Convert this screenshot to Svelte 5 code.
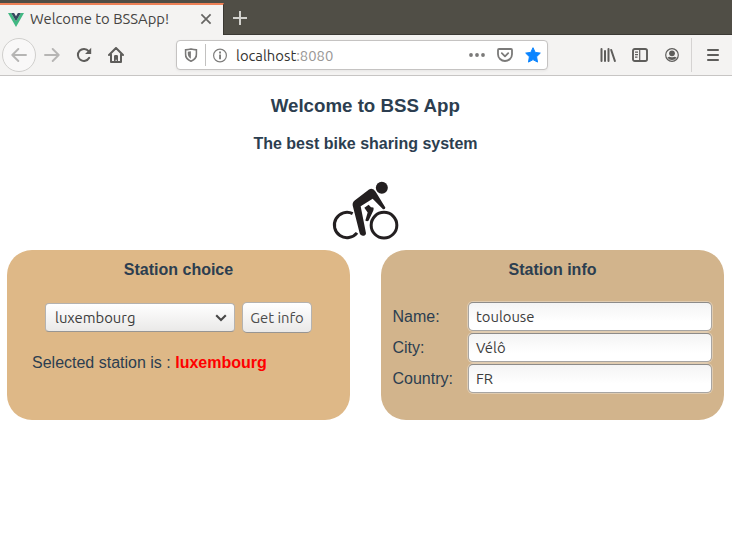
<script>
  const rows = [
    { label: 'Name:', value: 'toulouse' },
    { label: 'City:', value: 'Vélô' },
    { label: 'Country:', value: 'FR' }
  ];
</script>

<div class="window">
  <div class="tabs">
    <div class="tab">
      <svg class="vue" width="16" height="14" viewBox="0 0 16 14"><path fill="#41b883" d="M0 0h3.2L8 8.3 12.8 0H16L8 14z"/><path fill="#35495e" d="M3.2 0h2.9L8 3.3 9.9 0h2.9L8 8.3z"/></svg>
      <span class="title">Welcome to BSSApp!</span>
      <svg class="close" width="12" height="12" viewBox="0 0 12 12" stroke="#666563" stroke-width="1.7"><path d="M1.4 1.4l9.2 9.2M10.6 1.4l-9.2 9.2"/></svg>
    </div>
    <svg class="plus" width="14" height="14" viewBox="0 0 14 14" stroke="#d2d1cd" stroke-width="2"><path d="M7 0v14M0 7h14"/></svg>
  </div>

  <div class="toolbar">
    <div class="back"><svg width="16" height="14" viewBox="0 0 16 14"><path d="M15 7H1.500M7.3 1L1.3 7l6 6"/></svg></div>
    <svg class="forward" width="16" height="14" viewBox="0 0 16 14"><path d="M1 7h13.500M8.7 1l6 6-6 6"/></svg>
    <svg class="reload" width="16" height="16" viewBox="0 0 16 16"><path fill="none" stroke="#5e5d5b" stroke-width="2" stroke-linecap="round" d="M13.2 10.8A6 6 0 1 1 12.6 4.2"/><path fill="#5e5d5b" d="M15.2.8v6.1H9.1z"/></svg>
    <svg class="home" width="16" height="16" viewBox="0 0 16 16"><path fill="none" stroke="#5e5d5b" stroke-width="2" stroke-linecap="round" stroke-linejoin="round" d="M1 8l7-7 7 7M3 7.5V15h10V7.5"/><path fill="#5e5d5b" d="M6 15V9.3q0-1.3 1.3-1.3h1.4Q10 8 10 9.3V15H8.7v-2.2H7.6V15z"/></svg>
    <div class="url">
      <svg class="shield" width="13" height="14" viewBox="0 0 13 14"><path fill="none" stroke="#7a7978" stroke-width="1.7" d="M1 1.8Q4 1.7 6.5 1 9 1.7 12 1.8V6q0 5-5.5 7.2Q1 11 1 6z"/><path fill="#7a7978" d="M6.4 3.2v7.6Q3.3 9 3.3 5.8V3.7z"/></svg>
      <i class="split"></i>
      <svg class="info" width="15" height="15" viewBox="0 0 15 15"><circle cx="7.5" cy="7.5" r="6.4" fill="none" stroke="#7f7e7d" stroke-width="1.2"/><path fill="#7f7e7d" d="M6.6 6.5h1.9v4.7H6.6zM6.6 3.6h1.9v1.8H6.6z"/></svg>
      <span class="address">localhost<span>:8080</span></span>
      <svg class="dots" width="16" height="4" viewBox="0 0 16 4" fill="#7b7a79"><circle cx="2" cy="2" r="1.9"/><circle cx="8" cy="2" r="1.9"/><circle cx="14" cy="2" r="1.9"/></svg>
      <svg class="pocket" width="16" height="14" viewBox="0 0 16 14" fill="none" stroke="#7b7a79" stroke-width="1.8" stroke-linecap="round" stroke-linejoin="round"><path d="M2 1h12q1 0 1 1v4.2a7 6.8 0 0 1-14 0V2q0-1 1-1z"/><path d="M4.8 5.2L8 8.3l3.2-3.1"/></svg>
      <svg class="star" width="16" height="16" viewBox="0 0 16 16"><path fill="#0a84ff" stroke="#0a84ff" stroke-linejoin="round" d="M8 .7l2.2 4.7 5.1.7-3.7 3.6.9 5.4L8 12.6l-4.5 2.5.9-5.4L.7 6.1l5.1-.7z"/></svg>
    </div>
    <svg class="library" width="16" height="14" viewBox="0 0 16 14" stroke="#5e5d5b" stroke-width="2" stroke-linecap="round"><path d="M1.500 1v12M5 3v10M8.500 1v12M11.200 2l3.700 11"/></svg>
    <svg class="sidebar" width="16" height="14" viewBox="0 0 16 14" fill="none" stroke="#5e5d5b"><rect x="1" y="1" width="14" height="12" rx="1.8" stroke-width="1.9"/><path d="M7.7 1v12M3 4.1h3M3 6.6h3M3 9.1h2.5" stroke-width="1.2"/></svg>
    <svg class="account" width="14" height="14" viewBox="0 0 14 14" fill="#5e5d5b"><circle cx="7" cy="7" r="6.3" fill="none" stroke="#5e5d5b" stroke-width="1.2"/><circle cx="7" cy="5.3" r="2.9"/><path d="M2.4 9.4q2-.9 2.8-.5 1.8.9 3.6 0 .8-.4 2.8.5Q10.2 12 7 12t-4.6-2.6z"/></svg>
    <i class="divider"></i>
    <svg class="menu" width="12" height="12" viewBox="0 0 12 12" stroke="#5e5d5b" stroke-width="1.8" stroke-linecap="round"><path d="M.9 1h10.2M.9 6h10.2M.9 11h10.2"/></svg>
  </div>

  <main>
    <h3>Welcome to BSS App</h3>
    <h4>The best bike sharing system</h4>
    <svg class="bike" width="70" height="65" viewBox="29 23.500 210 195" fill="#231f20">
      <circle cx="184.500" cy="53" r="18"/>
      <circle cx="191" cy="165" r="38.500" fill="none" stroke="#231f20" stroke-width="9"/>
      <path fill="none" stroke="#231f20" stroke-width="9" d="M97 130.500A38 38 0 1 0 110 188"/>
      <path d="M146 58Q158 52 166 65L195 112Q195 119 188 117L157 86 121 108 137 189Q136 197 127 197 120 196 118 189L98 110Q94 98 103 91z"/>
      <path d="M132 113L145 104 152 111 159 112Q161 115 159 121L145 151Q141 155 135 151L142 127Z"/>
    </svg>
    <div class="cards">
      <section class="choice">
        <h4>Station choice</h4>
        <div class="controls">
          <div class="select"><span>luxembourg</span><svg width="12" height="8" viewBox="0 0 12 8"><path fill="none" stroke="#484848" stroke-width="2.100" d="M1.200 1.200L6 6l4.800-4.800"/></svg></div>
          <button>Get info</button>
        </div>
        <p>Selected station is : <b>luxembourg</b></p>
      </section>
      <section class="details">
        <h4>Station info</h4>
        <div class="form">
          {#each rows as row}
            <div class="row"><span class="label">{row.label}</span><div class="field">{row.value}</div></div>
          {/each}
        </div>
      </section>
    </div>
  </main>
</div>

<style>
  :global(body) { margin: 0; background: #fff; }
  * { box-sizing: border-box; }
  svg, i { flex: none; display: block; }
  .window { width: 732px; height: 547px; overflow: hidden; background: #fff; }
  .title, .address, .select, button, .field { font-family: Ubuntu, "Noto Sans", sans-serif; font-size: 14.800px; white-space: nowrap; }
  .tabs { height: 35px; display: flex; align-items: flex-start; background: #504e46; border-bottom: 1px solid #3b3934; padding-top: 3px; }
  .tab { width: 224px; height: 32px; flex: none; background: #f4f3f2; border-top: 2px solid #ee8157; border-right: 1px solid #393732; display: flex; align-items: center; padding: 0 11px 3px 8px; }
  .title { width: 170px; margin-left: 6px; color: #454442; }
  .vue { margin-top: 2px; }
  .close { margin-top: 1px; }
  .plus { margin: 8px 0 0 9px; }
  .toolbar { height: 41px; background: #f4f3f2; border-bottom: 1px solid #c7c5c4; display: flex; align-items: center; }
  .back { width: 34px; height: 34px; flex: none; margin-left: 2px; border: 1px solid #d0cfcd; border-radius: 50%; background: #f9f8f8; display: flex; align-items: center; justify-content: center; }
  .back path, .forward path { fill: none; stroke: #b6b5b4; stroke-width: 1.9; stroke-linecap: round; stroke-linejoin: round; }
  .forward { margin-left: 8px; }
  .reload { margin-left: 16px; }
  .home { margin-left: 16px; }
  .url { width: 372px; height: 30px; margin-left: 52px; border: 1px solid #c5c3c2; border-radius: 4px; background: #fff; display: flex; align-items: center; box-shadow: 0 1px 3px rgba(0,0,0,.06); flex: none; padding-left: 8px; }
  .shield { margin-right: -1px; transform: translateX(-.5px); }
  .split { width: 1px; height: 22px; background: #c2c1c0; margin-left: 8px; }
  .info { margin-left: 7px; transform: translateX(-.5px); }
  .address { margin-left: 8px; width: 233px; color: #343331; line-height: 20px; padding-top: 1px; }
  .address span { color: #999796; }
  .pocket { margin-left: 12px; }
  .star { margin-left: 12px; }
  .library { margin-left: 52px; }
  .sidebar { margin-left: 16px; }
  .account { margin-left: 17px; }
  .divider { width: 1px; height: 34px; background: #d5d3d2; margin-left: 12px; }
  .menu { margin-left: 15px; }
  main { color: #2c3e50; font: 16px/18px "Liberation Sans", Arial, sans-serif; display: flex; flex-direction: column; align-items: center; }
  h3 { font-size: 18.72px; line-height: 22px; margin: 19px 1.500px 0 0; }
  h4 { font-size: 16px; line-height: 18px; margin: 18px 1px 0 0; text-align: center; }
  .bike { margin: 25px 2px 0 0; }
  .cards { width: 732px; display: flex; justify-content: space-between; padding: 0 8px 0 7px; margin-top: 7px; }
  section { width: 343px; height: 170px; border-radius: 25px; }
  section h4 { margin: 11px 0 0; }
  .choice { background: #deb887; }
  .details { background: #d2b48c; }
  .controls { display: flex; align-items: center; gap: 7px; padding-left: 38px; margin-top: 23px; height: 31px; }
  .select { width: 190px; height: 29px; border: 1px solid #b4b2b0; border-bottom-color: #979593; border-radius: 4px; background: linear-gradient(#fff, #eae9e8); color: #3c3c3c; display: flex; align-items: center; justify-content: space-between; padding: 0 7px 0 9px; }
  button { width: 70px; height: 31px; border: 1px solid #b4b2b0; border-bottom-color: #979593; border-radius: 5px; background: linear-gradient(#fff, #eae9e8); color: #4c4c4c; padding: 0; }
  p { margin: 21px 0 0 25px; line-height: 18px; }
  b { color: red; }
  .form { display: flex; flex-direction: column; gap: 2px; margin: 23px 0 0 11.500px; }
  .row { display: flex; align-items: center; }
  .label { width: 75.500px; }
  .field { width: 244px; height: 29px; border: 1px solid #a7a5a3; border-top-color: #8d8b89; border-radius: 5px; background: linear-gradient(#f4f4f4, #fff 70%); box-shadow: 0 0 0 1px #e0ccb1; color: #3c3c3c; line-height: 27px; padding-left: 7px; }
</style>
